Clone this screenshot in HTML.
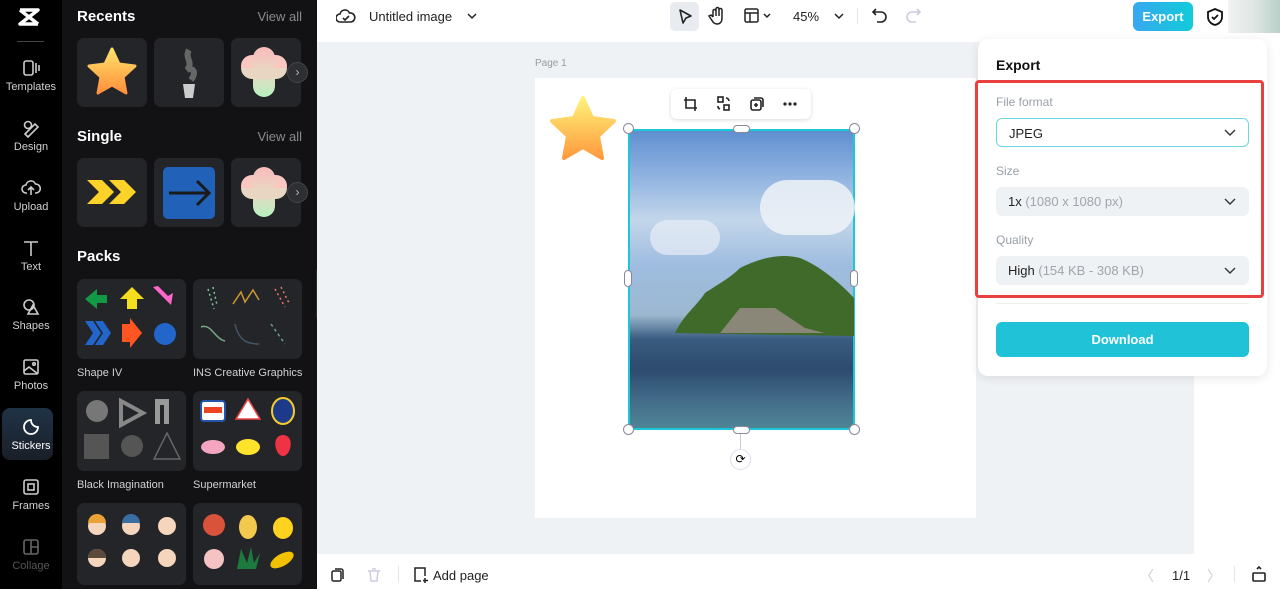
<!DOCTYPE html>
<html><head><meta charset="utf-8"><style>
*{margin:0;padding:0;box-sizing:border-box}
body{width:1280px;height:589px;overflow:hidden;font-family:"Liberation Sans",sans-serif;background:#fff;position:relative}
.abs{position:absolute}
#rail{left:0;top:0;width:62px;height:589px;background:#000}
.ri{position:absolute;left:0;width:62px;text-align:center;color:#cfd0d3;font-size:11px}
.ri svg{display:block;margin:0 auto 3px}
#panel{left:62px;top:0;width:255px;height:589px;background:#121214}
.h{position:absolute;color:#fff;font-weight:bold;font-size:15px}
.va{position:absolute;right:15px;color:#8a8b90;font-size:13px}
.tile{position:absolute;background:#242529;border-radius:7px}
.lab{position:absolute;color:#d0d1d4;font-size:11px}
.arr{position:absolute;width:21px;height:21px;border-radius:50%;background:#2e2f33;border:1px solid #444;color:#bbb;font-size:12px;text-align:center;line-height:18px}
#canvasbg{left:317px;top:42px;width:877px;height:512px;background:#eff2f5}
.sel{position:absolute;background:#fff;border:1px solid #889;border-radius:50%;width:11px;height:11px}
</style></head><body>
<div id="rail" class="abs">
 <svg class="abs" style="left:17px;top:7px" width="24" height="20" viewBox="0 0 24 20"><path d="M3 3h18L3 17h18M3 3l18 14" stroke="#fff" stroke-width="3.5" fill="none" stroke-linejoin="round"/></svg>
 <div class="abs" style="left:17px;top:41px;width:27px;height:1px;background:#444"></div>
 <div class="ri" style="top:58px"><svg width="20" height="20" viewBox="0 0 20 20" fill="none" stroke="#ccc" stroke-width="1.6"><rect x="3" y="3" width="9" height="14" rx="2"/><path d="M15 5v10M18 7v6"/></svg>Templates</div>
 <div class="ri" style="top:118px"><svg width="20" height="20" viewBox="0 0 20 20" fill="none" stroke="#ccc" stroke-width="1.6"><circle cx="7" cy="7" r="3.5"/><path d="M4 16l10-10 3 3-10 10z"/></svg>Design</div>
 <div class="ri" style="top:178px"><svg width="20" height="20" viewBox="0 0 20 20" fill="none" stroke="#ccc" stroke-width="1.6"><path d="M6 15H5a4 4 0 010-8 5 5 0 019.5-1A4 4 0 0115 15h-1M10 17v-7M7 12l3-3 3 3"/></svg>Upload</div>
 <div class="ri" style="top:238px"><svg width="20" height="20" viewBox="0 0 20 20" fill="none" stroke="#ccc" stroke-width="1.6"><path d="M3 4h14M10 4v14"/></svg>Text</div>
 <div class="ri" style="top:297px"><svg width="20" height="20" viewBox="0 0 20 20" fill="none" stroke="#ccc" stroke-width="1.6"><circle cx="8" cy="8" r="5"/><path d="M12 8l5 9H7z"/></svg>Shapes</div>
 <div class="ri" style="top:357px"><svg width="20" height="20" viewBox="0 0 20 20" fill="none" stroke="#ccc" stroke-width="1.6"><rect x="3" y="3" width="14" height="14" rx="1.5"/><path d="M3 14l5-4 9 7"/><circle cx="13" cy="7" r="1.3"/></svg>Photos</div>
 <div class="abs" style="left:2px;top:408px;width:51px;height:52px;border-radius:8px;background:linear-gradient(#1f3346,#1a1f28)"></div>
 <div class="ri" style="top:417px;color:#fff"><svg width="20" height="20" viewBox="0 0 20 20" fill="none" stroke="#fff" stroke-width="1.8"><path d="M17 10a7 7 0 11-7-7c0 4 3 7 7 7z"/></svg>Stickers</div>
 <div class="ri" style="top:477px"><svg width="20" height="20" viewBox="0 0 20 20" fill="none" stroke="#ccc" stroke-width="1.6"><rect x="3" y="3" width="14" height="14" rx="2"/><rect x="7" y="7" width="6" height="6"/></svg>Frames</div>
 <div class="ri" style="top:537px;color:#555"><svg width="20" height="20" viewBox="0 0 20 20" fill="none" stroke="#666" stroke-width="1.6"><rect x="3" y="3" width="14" height="14" rx="2"/><path d="M10 3v14M10 10h7"/></svg>Collage</div>
</div>
<div id="panel" class="abs">
 <div class="h" style="left:15px;top:8px">Recents</div><div class="va" style="top:9px">View all</div>
 <div class="tile" style="left:15px;top:38px;width:70px;height:69px"><svg width="70" height="69" viewBox="0 0 70 69"><defs><linearGradient id="sg" x1="0" y1="0" x2="0" y2="1"><stop offset="0" stop-color="#ffe36a"/><stop offset="1" stop-color="#ff8f3c"/></linearGradient></defs><path d="M35 11l7 15 16 2-12 11 3 16-14-8-14 8 3-16-12-11 16-2z" fill="url(#sg)" stroke="url(#sg)" stroke-width="3" stroke-linejoin="round"/></svg></div>
 <div class="tile" style="left:92px;top:38px;width:70px;height:69px"><svg width="70" height="69"><path d="M35 12c-5 8 5 12-2 20 6-3 10 2 4 10" stroke="#666" stroke-width="6" fill="none"/><path d="M29 46h12l-2 14h-8z" fill="#ccc"/></svg></div>
 <div class="tile" style="left:169px;top:38px;width:70px;height:69px;overflow:hidden"><div class="abs" style="left:10px;top:17px;width:46px;height:22px;border-radius:11px;background:#f9c7c0"></div><div class="abs" style="left:22px;top:9px;width:22px;height:50px;border-radius:11px;background:linear-gradient(#f9bcbc,#e8d7c2 50%,#b7f2c0)"></div><div class="abs" style="left:10px;top:30px;width:46px;height:11px;background:#e9d6c2;border-radius:0 0 11px 11px"></div></div>
 <div class="arr" style="left:225px;top:62px">›</div>
 <div class="h" style="left:15px;top:128px">Single</div><div class="va" style="top:129px">View all</div>
 <div class="tile" style="left:15px;top:158px;width:70px;height:69px"><svg width="70" height="69"><path d="M10 11h15l12 12-12 12H10l12-12zM32 11h15l12 12-12 12H32l12-12z" transform="translate(0,11)" fill="#fdd329"/></svg></div>
 <div class="tile" style="left:92px;top:158px;width:70px;height:69px"><div class="abs" style="left:9px;top:9px;width:52px;height:52px;border-radius:5px;background:#2161b8"></div><svg class="abs" width="70" height="69"><path d="M15 35h39M43 23l12 12-12 12" stroke="#1a1a1a" stroke-width="3" fill="none"/></svg></div>
 <div class="tile" style="left:169px;top:158px;width:70px;height:69px;overflow:hidden"><div class="abs" style="left:10px;top:17px;width:46px;height:22px;border-radius:11px;background:#f9c7c0"></div><div class="abs" style="left:22px;top:9px;width:22px;height:50px;border-radius:11px;background:linear-gradient(#f9bcbc,#e8d7c2 50%,#b7f2c0)"></div><div class="abs" style="left:10px;top:30px;width:46px;height:11px;background:#e9d6c2;border-radius:0 0 11px 11px"></div></div>
 <div class="arr" style="left:225px;top:182px">›</div>
 <div class="h" style="left:15px;top:248px">Packs</div>
 <div class="tile" style="left:15px;top:279px;width:109px;height:80px"><svg width="109" height="80"><path d="M8 20l12-10v6h10v8H20v6z" fill="#119944"/><path d="M55 8l-12 12h7v10h10V20h7z" fill="#f5df1c"/><path d="M76 8l18 18 2-12-5 3-10-10z" fill="#ff66cc"/><path d="M8 42l8 12-8 12h8l8-12-8-12zM18 42l8 12-8 12h8l8-12-8-12z" fill="#2266cc"/><path d="M45 45h8v-6l12 15-12 15v-6h-8z" fill="#ff5522"/><circle cx="88" cy="55" r="11" fill="#2266cc"/></svg></div>
 <div class="tile" style="left:131px;top:279px;width:109px;height:80px"><svg width="109" height="80" fill="none" stroke-width="1.5"><path d="M15 10l6 20M20 8l4 18" stroke="#7c9" stroke-dasharray="2 3"/><path d="M40 25l8-12 4 10 8-12 6 10" stroke="#c93"/><path d="M82 10l10 18M88 8l8 16" stroke="#e76" stroke-dasharray="2 3"/><path d="M8 48c10-4 14 12 24 14" stroke="#7a8"/><path d="M42 45c4 18 14 20 24 20" stroke="#456"/><path d="M78 45l14 20" stroke="#699" stroke-dasharray="3 3"/></svg></div>
 <div class="lab" style="left:15px;top:367px">Shape IV</div><div class="lab" style="left:131px;top:367px">INS Creative Graphics</div>
 <div class="tile" style="left:15px;top:391px;width:109px;height:80px"><svg width="109" height="80"><circle cx="20" cy="20" r="11" fill="#777"/><path d="M44 10l22 12-22 12z" fill="none" stroke="#888" stroke-width="4"/><path d="M78 8h14v25h-5V14h-4v19h-5z" fill="#999"/><rect x="7" y="43" width="25" height="25" fill="#555"/><circle cx="55" cy="55" r="11" fill="#555"/><path d="M90 42l13 26H77z" fill="none" stroke="#666" stroke-width="1.5"/></svg></div>
 <div class="tile" style="left:131px;top:391px;width:109px;height:80px"><svg width="109" height="80"><rect x="8" y="10" width="24" height="20" rx="3" fill="#fff" stroke="#2255aa" stroke-width="2"/><rect x="11" y="16" width="18" height="6" fill="#e42"/><path d="M55 8l12 20H43z" fill="#fff" stroke="#e44" stroke-width="1.5"/><ellipse cx="90" cy="20" rx="11" ry="13" fill="#1d3a8a" stroke="#f5cd2a" stroke-width="2"/><ellipse cx="20" cy="56" rx="12" ry="7" fill="#f4a6c1"/><ellipse cx="55" cy="56" rx="12" ry="8" fill="#ffe32a"/><path d="M90 44c-8 0-10 10-5 18 3 4 7 4 10 0 5-8 3-18-5-18z" fill="#e34"/></svg></div>
 <div class="lab" style="left:15px;top:479px">Black Imagination</div><div class="lab" style="left:131px;top:479px">Supermarket</div>
 <div class="tile" style="left:15px;top:503px;width:109px;height:82px"><svg width="109" height="82"><g fill="#f5d5bb"><circle cx="20" cy="23" r="9"/><circle cx="54" cy="23" r="9"/><circle cx="90" cy="23" r="9"/><circle cx="20" cy="55" r="9"/><circle cx="54" cy="55" r="9"/><circle cx="90" cy="55" r="9"/></g><path d="M11 20a9 9 0 0118 0" fill="#e9a235"/><path d="M45 20a9 9 0 0118 0" fill="#3a6ea0"/><path d="M11 55a9 9 0 0118 0" fill="#5b4a3a"/></svg></div>
 <div class="tile" style="left:131px;top:503px;width:109px;height:82px"><svg width="109" height="82"><circle cx="21" cy="22" r="11" fill="#d9533a"/><ellipse cx="55" cy="24" rx="9" ry="12" fill="#f2c94c"/><ellipse cx="90" cy="25" rx="10" ry="11" fill="#ffd21f"/><circle cx="21" cy="56" r="10" fill="#f5c3c3"/><path d="M44 66l4-20 6 14 4-16 3 16 6-10-4 16z" fill="#1c7a3f"/><ellipse cx="89" cy="57" rx="13" ry="6" transform="rotate(-30 89 57)" fill="#f2c200"/></svg></div>
</div>
<div class="abs" style="left:316px;top:270px;width:8px;height:48px;background:#2a2b2e;border-radius:0 5px 5px 0"></div>
<!-- top bar -->
<svg class="abs" style="left:336px;top:7px" width="20" height="18" fill="none" stroke="#222" stroke-width="1.6"><path d="M5 15H4a4 4 0 010-8 5 5 0 019.5-1A4 4 0 0115 15z"/><path d="M7 11l2 2 4-4"/></svg>
<div class="abs" style="left:369px;top:9px;font-size:13px;color:#222">Untitled image</div>
<svg class="abs" style="left:467px;top:12px" width="10" height="8" fill="none" stroke="#222" stroke-width="1.5"><path d="M1 2l4 4 4-4"/></svg>
<div class="abs" style="left:670px;top:2px;width:29px;height:29px;background:#e8ecf0;border-radius:5px"></div>
<svg class="abs" style="left:676px;top:7px" width="18" height="20" fill="none" stroke="#222" stroke-width="1.6"><path d="M4 3l11 6-5 2-3 5z" stroke-linejoin="round"/></svg>
<svg class="abs" style="left:708px;top:6px" width="18" height="20" fill="none" stroke="#222" stroke-width="1.5"><path d="M5 11V5a1.5 1.5 0 013 0v5V3a1.5 1.5 0 013 0v7V4a1.5 1.5 0 013 0v8c0 4-2 6-5 6s-4-2-6-5l-2-3 2-1 2 2"/></svg>
<svg class="abs" style="left:744px;top:8px" width="30" height="16" fill="none" stroke="#222" stroke-width="1.5"><rect x="1" y="1" width="13" height="13" rx="1.5"/><path d="M1 5h13M6 5v9M20 6l3 3 3-3"/></svg>
<div class="abs" style="left:793px;top:9px;font-size:13px;color:#222">45%</div>
<svg class="abs" style="left:834px;top:12px" width="10" height="8" fill="none" stroke="#222" stroke-width="1.5"><path d="M1 2l4 4 4-4"/></svg>
<div class="abs" style="left:857px;top:8px;width:1px;height:16px;background:#e3e5e8"></div>
<svg class="abs" style="left:872px;top:7px" width="16" height="18" fill="none" stroke="#222" stroke-width="1.6"><path d="M4 2L1 5l3 3M1 5h8a5 5 0 010 10H5"/></svg>
<svg class="abs" style="left:905px;top:7px" width="16" height="18" fill="none" stroke="#ccd" stroke-width="1.6"><path d="M12 2l3 3-3 3M15 5H7a5 5 0 000 10h4"/></svg>
<div class="abs" style="left:1133px;top:2px;width:60px;height:29px;border-radius:6px;background:linear-gradient(90deg,#38a8f0,#12cbd9);color:#fff;font-size:13px;font-weight:bold;text-align:center;line-height:29px">Export</div>
<svg class="abs" style="left:1206px;top:7px" width="18" height="20" fill="none" stroke="#111" stroke-width="1.8"><path d="M9 2l7 3v5c0 4-3 7-7 8-4-1-7-4-7-8V5z"/><path d="M6 10l2 2 4-4"/></svg>
<div class="abs" style="left:1228px;top:0;width:52px;height:33px;background:linear-gradient(90deg,#f0f2f1,#dfe6e3 50%,#b9cfc8)"></div>
<!-- canvas -->
<div id="canvasbg" class="abs"></div>
<div class="abs" style="left:535px;top:58px;font-size:10px;color:#999">Page 1</div>
<div class="abs" style="left:535px;top:78px;width:441px;height:440px;background:#fff"></div>
<svg class="abs" style="left:545px;top:94px" width="76" height="70"><defs><linearGradient id="sg2" x1="0" y1="0" x2="0" y2="1"><stop offset="0" stop-color="#fff27a"/><stop offset="1" stop-color="#ff9a3e"/></linearGradient></defs><path d="M38 4l9 20 22 3-16 15 4 22-19-11-19 11 4-22L7 27l22-3z" fill="url(#sg2)" stroke="url(#sg2)" stroke-width="4" stroke-linejoin="round"/></svg>
<div class="abs" style="left:628px;top:129px;width:227px;height:301px;background:linear-gradient(#5f8fd0 0%,#8fb2e0 15%,#c3d6ea 30%,#9fbde0 45%,#9bb7cf 62%,#3a5c80 70%,#2d4b6e 80%,#45708c 92%,#4e8596 100%);border:2px solid #1cc7d8"></div>
<div class="abs" style="left:760px;top:180px;width:95px;height:55px;border-radius:30px;background:#eef2f7;opacity:.85"></div>
<div class="abs" style="left:650px;top:220px;width:70px;height:35px;border-radius:20px;background:#e8eef6;opacity:.7"></div>
<svg class="abs" style="left:630px;top:230px" width="224" height="110"><path d="M45 103c10-20 20-25 30-40 15-10 25-15 35-25 20-10 40-15 60-10 20 8 40 25 54 40v38z" fill="#3f6a2a"/><path d="M90 103l20-25 35 0 30 20 20 5z" fill="#8a8778"/></svg>
<div class="sel" style="left:623px;top:123px"></div><div class="sel" style="left:849px;top:123px"></div><div class="sel" style="left:623px;top:424px"></div><div class="sel" style="left:849px;top:424px"></div>
<div class="abs" style="left:733px;top:125px;width:17px;height:8px;border-radius:4px;background:#fff;border:1px solid #889"></div>
<div class="abs" style="left:733px;top:426px;width:17px;height:8px;border-radius:4px;background:#fff;border:1px solid #889"></div>
<div class="abs" style="left:624px;top:270px;width:8px;height:17px;border-radius:4px;background:#fff;border:1px solid #889"></div>
<div class="abs" style="left:850px;top:270px;width:8px;height:17px;border-radius:4px;background:#fff;border:1px solid #889"></div>
<div class="abs" style="left:740px;top:434px;width:1px;height:16px;background:#ccc"></div>
<div class="abs" style="left:730px;top:449px;width:21px;height:21px;border-radius:50%;background:#fff;border:1px solid #dde;text-align:center;line-height:19px;font-size:12px">⟳</div>
<div class="abs" style="left:671px;top:89px;width:140px;height:30px;background:#fff;border-radius:6px;box-shadow:0 1px 4px rgba(0,0,0,.15)"></div>
<svg class="abs" style="left:683px;top:96px" width="120" height="16" fill="none" stroke="#222" stroke-width="1.6"><path d="M3 1v11h11M1 4h11v11"/><rect x="35" y="1" width="5" height="5"/><rect x="41" y="9" width="5" height="5"/><path d="M43 2a3 3 0 013 3M37 13a3 3 0 01-2-3"/><rect x="68" y="4" width="10" height="10" rx="2"/><path d="M71 2h7a2 2 0 012 2v7M73 7v4M71 9h4"/><circle cx="102" cy="8" r=".8" fill="#222"/><circle cx="107" cy="8" r=".8" fill="#222"/><circle cx="112" cy="8" r=".8" fill="#222"/></svg>
<!-- bottom bar -->
<svg class="abs" style="left:330px;top:567px" width="16" height="16" fill="none" stroke="#222" stroke-width="1.5"><rect x="2" y="4" width="9" height="10" rx="1.5"/><path d="M5 2h6a2 2 0 012 2v8"/></svg>
<svg class="abs" style="left:366px;top:567px" width="16" height="16" fill="none" stroke="#ccd" stroke-width="1.5"><path d="M2 4h12M4 4l1 10h6l1-10M6 2h4"/></svg>
<div class="abs" style="left:398px;top:566px;width:1px;height:16px;background:#e3e5e8"></div>
<svg class="abs" style="left:412px;top:566px" width="16" height="18" fill="none" stroke="#222" stroke-width="1.5"><path d="M9 15H3V2h10v8M13 12v5M11 14.5h5"/></svg>
<div class="abs" style="left:433px;top:568px;font-size:13px;color:#222">Add page</div>
<div class="abs" style="left:1140px;top:566px;font-size:14px;color:#ccc">〈</div>
<div class="abs" style="left:1172px;top:568px;font-size:13px;color:#222">1/1</div>
<div class="abs" style="left:1207px;top:566px;font-size:14px;color:#ccc">〉</div>
<div class="abs" style="left:1234px;top:566px;width:1px;height:16px;background:#e3e5e8"></div>
<svg class="abs" style="left:1251px;top:565px" width="16" height="18" fill="none" stroke="#222" stroke-width="1.6"><rect x="2" y="8" width="12" height="8" rx="1"/><path d="M6 4l2-2 2 2"/></svg>
<!-- export panel -->
<div class="abs" style="left:978px;top:39px;width:289px;height:337px;background:#fff;border-radius:10px;box-shadow:0 2px 10px rgba(0,0,0,.1)"></div>
<div class="abs" style="left:996px;top:57px;font-size:14px;font-weight:bold;color:#111">Export</div>
<div class="abs" style="left:975px;top:80px;width:289px;height:218px;border:3px solid #e8403f;border-radius:4px"></div>
<div class="abs" style="left:996px;top:95px;font-size:12px;color:#9aa0a8">File format</div>
<div class="abs" style="left:996px;top:118px;width:253px;height:29px;border:1px solid #6fd7e4;border-radius:6px;font-size:13px;color:#222;padding:7px 0 0 12px">JPEG</div>
<div class="abs" style="left:996px;top:164px;font-size:12px;color:#9aa0a8">Size</div>
<div class="abs" style="left:996px;top:187px;width:253px;height:29px;background:#eff2f5;border-radius:6px;font-size:13px;color:#222;padding:7px 0 0 12px">1x <span style="color:#a0a5ac">(1080 x 1080 px)</span></div>
<div class="abs" style="left:996px;top:233px;font-size:12px;color:#9aa0a8">Quality</div>
<div class="abs" style="left:996px;top:256px;width:253px;height:29px;background:#eff2f5;border-radius:6px;font-size:13px;color:#222;padding:7px 0 0 12px">High <span style="color:#a0a5ac">(154 KB - 308 KB)</span></div>
<svg class="abs" style="left:1224px;top:128px" width="12" height="150" fill="none" stroke="#333" stroke-width="1.4"><path d="M1 2l5 5 5-5M1 71l5 5 5-5M1 140l5 5 5-5"/></svg>
<div class="abs" style="left:996px;top:303px;width:253px;height:1px;background:#eceef0"></div>
<div class="abs" style="left:996px;top:322px;width:253px;height:35px;background:#1fc2d6;border-radius:6px;color:#fff;font-size:13px;font-weight:bold;text-align:center;line-height:35px">Download</div>
</body></html>
